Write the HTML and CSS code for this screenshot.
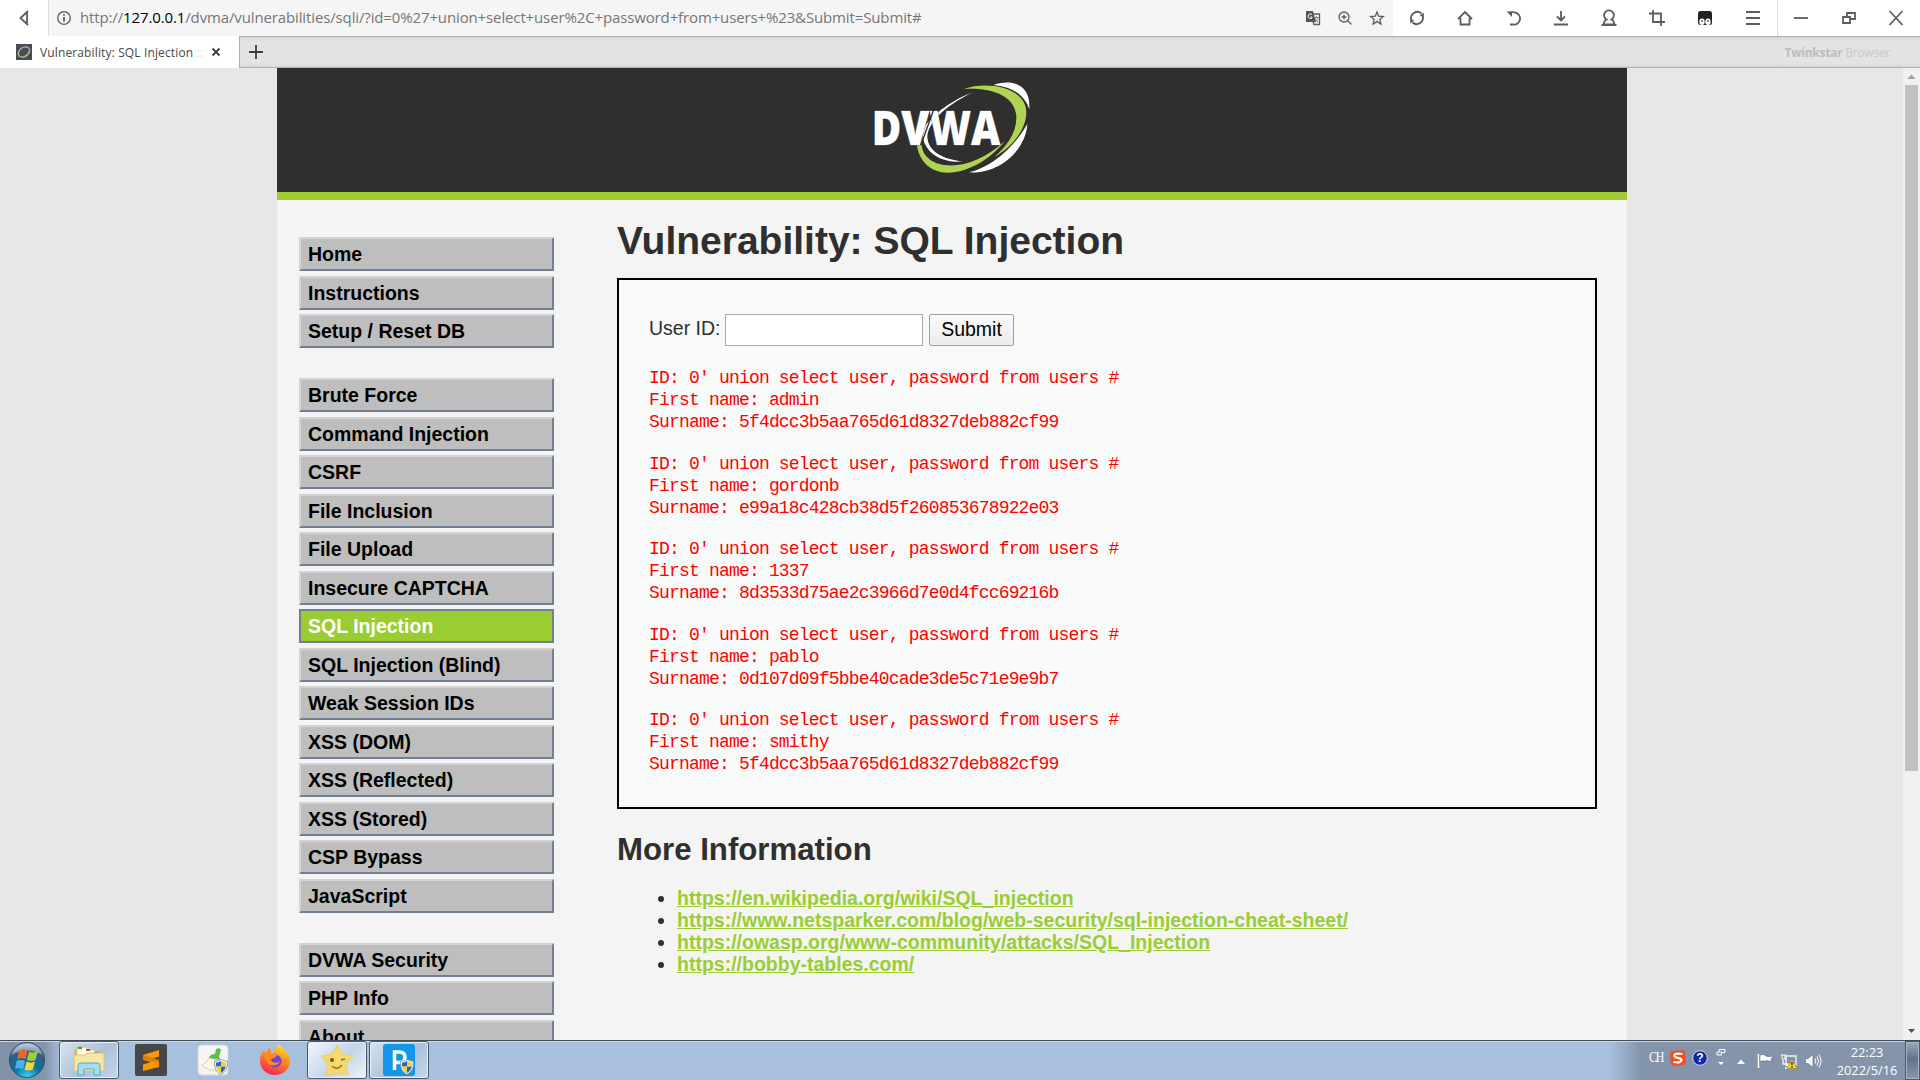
FILE: index.html
```html
<!DOCTYPE html>
<html lang="en">
<head>
<meta charset="utf-8">
<title>Vulnerability: SQL Injection</title>
<link rel="stylesheet" href="styles.css">
</head>
<body>
<div class="toolbar">
  <div class="back"><svg width="14" height="18" viewBox="0 0 14 18"><path d="M11 2 3.500 9 11 16M10 3v12" class="ln"/></svg></div>
  <div class="address">
    <svg width="16" height="16" viewBox="0 0 16 16"><circle cx="8" cy="8" r="6.300" class="ln thin"/><path d="M8 7v4.500M8 4.300v1.500" class="ln"/></svg>
    <div class="url">http://<b>127.0.0.1</b>/dvma/vulnerabilities/sqli/?id=0%27+union+select+user%2C+password+from+users+%23&amp;Submit=Submit#</div>
    <div class="address-icons">
      <svg width="16" height="16" viewBox="0 0 16 16"><path d="M1 1h7l3 11H1z" fill="#555"/><path d="M8 4h6.500v10.500H9l-1-3" class="ln thin"/><path d="M7 4.500a2.300 2.300 0 1 0 0 3.500V7H5.500" fill="none" stroke="#fff"/><path d="M9 7.500h5M11.500 6v1.500M13 8c-.5 2-2 3.500-3 4M10 8c.5 2 2 3.500 3.500 4" class="ln hair"/></svg>
      <svg width="16" height="16" viewBox="0 0 16 16"><circle cx="7" cy="7" r="5" class="ln thin"/><path d="m10.500 10.500 4 4M4.500 7h5M7 4.500v5" class="ln thin"/></svg>
      <svg width="16" height="16" viewBox="0 0 16 16"><path d="m8 2 1.700 4.200 4.600.3-3.500 3 1.100 4.500L8 11.600 4.100 14l1.100-4.500-3.500-3 4.600-.3z" class="ln thin"/></svg>
    </div>
  </div>
  <div class="tools">
    <svg width="18" height="18" viewBox="0 0 18 18"><path d="M3.300 11A6.300 6.300 0 0 1 13.500 4.500M14.700 7A6.300 6.300 0 0 1 4.500 13.500" class="ln"/><path d="M15.800 3.500v5l-4-2zM2.200 14.500v-5l4 2z" fill="#5b5d60"/></svg>
    <svg width="18" height="18" viewBox="0 0 18 18"><path d="M2 10 9 3l7 7M4.500 9v6.500h9V9" class="ln"/></svg>
    <svg width="18" height="18" viewBox="0 0 18 18"><path d="M5 4q3-1.500 6-.5a6 6 0 0 1-2 12H6" class="ln"/><path d="M2.500 2.500H8v5.500z" fill="#5b5d60"/></svg>
    <svg width="18" height="18" viewBox="0 0 18 18"><path d="M9 2v9M5 7.500l4 4 4-4M2 15.500h14" class="ln"/></svg>
    <svg width="18" height="18" viewBox="0 0 18 18"><path d="M6.500 10.500a4.900 4.900 0 1 1 5 0c1.500.6 2.500 2.500 3 5h-11c.5-2.500 1.500-4.400 3-5zM1.500 16h15" class="ln"/></svg>
    <svg width="18" height="18" viewBox="0 0 18 18"><path d="M5 1v12h12M1 4.500h12V17" class="ln"/></svg>
    <svg width="18" height="18" viewBox="0 0 18 18"><rect x="2" y="2" width="14" height="14" rx="2.500" fill="#222"/><ellipse cx="6" cy="12.800" rx="2.700" ry="3.200" fill="#fff"/><ellipse cx="12" cy="12.800" rx="2.700" ry="3.200" fill="#fff"/><path d="M6 11v2M12 11v2" stroke="#222"/></svg>
    <svg width="18" height="18" viewBox="0 0 18 18"><path d="M2 3h14M2 9h14M2 15h14" class="ln"/></svg>
  </div>
  <div class="window-buttons">
    <svg width="18" height="18" viewBox="0 0 18 18"><path d="M2 9h14" class="ln"/></svg>
    <svg width="18" height="18" viewBox="0 0 18 18"><path d="M3 8h7v6H3zM7 8V4h8v6h-5" class="ln"/></svg>
    <svg width="18" height="18" viewBox="0 0 18 18"><path d="m2.500 2 13 14M15.500 2l-13 14" class="ln"/></svg>
  </div>
</div>
<div class="tabs">
  <div class="tab">
    <svg width="16" height="16" viewBox="0 0 16 16"><path d="M0 0h16v16H0z" fill="#484d55"/><ellipse cx="8" cy="8" rx="6.200" ry="4.500" transform="rotate(-35 8 8)" fill="none" stroke="#b7bcae" stroke-width="1.300"/><path d="M13.500 4c.5 4-3 8-8 9" fill="none" stroke="#93b13f"/></svg>
    <span class="tab-title">Vulnerability: SQL Injection <i>::</i></span>
    <svg width="10" height="10" viewBox="0 0 10 10"><path d="m1.500 1.500 7 7M8.500 1.500l-7 7" class="ln dark"/></svg>
  </div>
  <div class="tab-rest">
    <svg width="16" height="16" viewBox="0 0 16 16"><path d="M8 1v14M1 8h14" class="ln dark"/></svg>
    <span class="brand"><b>Twinkstar</b> Browser</span>
  </div>
</div>
<div class="viewport">
  <div class="page">
    <div class="header">
      <svg class="logo" width="160" height="94" viewBox="98 64 480 282">
        <path d="M402 97C335 122 262 175 251 215C244 265 295 314 370 305C310 299 266 275 264 232C266 190 310 142 402 97z" fill="#fff"/>
        <text x="97" y="255" textLength="386" lengthAdjust="spacingAndGlyphs" class="logo-text">DVWA</text>
        <path d="m283 150-38 105" stroke="#2f2f2f" stroke-width="4"/>
        <path d="M373 88C450 62 562 85 561 160C560 215 510 268 465 292C500 262 533 220 531 170C527 110 460 82 373 88zM233 257C240 310 280 340 325 339C390 337 450 300 498 243C440 295 380 320 325 317C280 315 250 290 247 257z" fill="#afd352"/>
        <path d="M462 76C500 62 575 60 570 148C555 105 520 82 462 76zM564 193C560 270 480 345 388 338C450 325 520 270 564 193z" fill="#fff"/>
      </svg>
    </div>
    <div class="body">
      <div class="menu">
        <ul><li>Home</li><li>Instructions</li><li>Setup / Reset DB</li></ul>
        <ul><li>Brute Force</li><li>Command Injection</li><li>CSRF</li><li>File Inclusion</li><li>File Upload</li><li>Insecure CAPTCHA</li><li class="selected">SQL Injection</li><li>SQL Injection (Blind)</li><li>Weak Session IDs</li><li>XSS (DOM)</li><li>XSS (Reflected)</li><li>XSS (Stored)</li><li>CSP Bypass</li><li>JavaScript</li></ul>
        <ul><li>DVWA Security</li><li>PHP Info</li><li>About</li></ul>
      </div>
      <div class="main">
        <h1>Vulnerability: SQL Injection</h1>
        <div class="box">
          <div class="form"><label>User ID:</label><input type="text"><button>Submit</button></div>
<pre>ID: 0' union select user, password from users #
First name: admin
Surname: 5f4dcc3b5aa765d61d8327deb882cf99</pre>
<pre>ID: 0' union select user, password from users #
First name: gordonb
Surname: e99a18c428cb38d5f260853678922e03</pre>
<pre>ID: 0' union select user, password from users #
First name: 1337
Surname: 8d3533d75ae2c3966d7e0d4fcc69216b</pre>
<pre>ID: 0' union select user, password from users #
First name: pablo
Surname: 0d107d09f5bbe40cade3de5c71e9e9b7</pre>
<pre>ID: 0' union select user, password from users #
First name: smithy
Surname: 5f4dcc3b5aa765d61d8327deb882cf99</pre>
        </div>
        <h2>More Information</h2>
        <ul class="links">
          <li><a>https://en.wikipedia.org/wiki/SQL_injection</a></li>
          <li><a>https://www.netsparker.com/blog/web-security/sql-injection-cheat-sheet/</a></li>
          <li><a>https://owasp.org/www-community/attacks/SQL_Injection</a></li>
          <li><a>https://bobby-tables.com/</a></li>
        </ul>
      </div>
    </div>
  </div>
  <div class="scrollbar">
    <svg width="17" height="17" viewBox="0 0 17 17"><path d="m4.500 11 4-4.500 4 4.500z" fill="#a3a3a3"/></svg>
    <div class="thumb"></div>
    <svg width="17" height="17" viewBox="0 0 17 17"><path d="m5 6 3.500 4L12 6z" fill="#505050"/></svg>
  </div>
</div>
<div class="taskbar">
  <svg width="0" height="0" class="defs"><defs>
    <radialGradient id="orb" cx=".5" cy="1" r="1"><stop offset="0" stop-color="#35dcfa"/><stop offset=".4" stop-color="#0b6f9f"/><stop offset=".75" stop-color="#365d7e"/><stop offset="1" stop-color="#a9c3d6"/></radialGradient>
    <linearGradient id="fox" x1=".7" y1="0" x2=".3" y2="1"><stop offset="0" stop-color="#ffe32f"/><stop offset=".45" stop-color="#ff8a1c"/><stop offset="1" stop-color="#f0205b"/></linearGradient>
    <symbol id="shield" viewBox="0 0 14 16"><path d="M7 0c2 1.500 4 2 6.500 2 .5 7-1.500 11-6.500 13.500C2 13 0 9 .5 2 3 2 5 1.500 7 0z" fill="#e8e8e8" stroke="#777" stroke-width=".6"/><path d="M7 2v5.500H2V3.500C4 3.500 5.500 3 7 2zM7 7.500h4.700C11.200 10.500 9.500 12.500 7 14z" fill="#2467c4"/><path d="M7 2v5.500h4.900v-4C10 3.500 8.500 3 7 2zM7 7.500H2.200C2.700 10.500 4.500 12.500 7 14z" fill="#f8cf2c"/></symbol>
  </defs></svg>
  <div class="start"><svg width="38" height="38" viewBox="0 0 38 38"><circle cx="19" cy="19" r="17.500" fill="url(#orb)" stroke="#2c4f6b"/><path d="M4 14C8-1 30-1 34 14 27 8 11 8 4 14z" fill="#fff" opacity=".35"/><path d="M11 10c3-2 6-2 8.500-.5L17.500 18c-3-1.500-6-1-8.500 0z" fill="#ef6523"/><path d="M21 10.500c3 1.500 6 1 9-.5l-2.500 9c-3 1.500-6 1-8.500 0z" fill="#9bcf3a"/><path d="M8.500 20c3-1.500 6-1.500 8.500 0l-2 8c-3-1.500-5.500-1.500-8 0z" fill="#4cb1ee"/><path d="M18.500 20.500c3 1.500 5.500 1.500 8.500 0l-2.200 8c-3 1.500-6 1.300-8.300 0z" fill="#fdd33c"/></svg></div>
  <div class="task open"><svg width="32" height="32" viewBox="0 0 32 32"><path d="M2 6h9l2 2h17v18H2z" fill="#ecd078" stroke="#c9a750"/><path d="M4 3h10v3h8v3h8v4H4z" fill="#fffbe8" stroke="#d5bd76"/><path d="M5 3h4v2H5z" fill="#25ad3a"/><path d="M13 5h4v2h-4z" fill="#d8442c"/><path d="M21 8h4v2h-4z" fill="#2a8ad4"/><path d="M1 11h11l2-2h17v18H1z" fill="#f8e7a0" stroke="#dcc275"/><path d="M5 31V22q0-3 3-3h16q3 0 3 3v9h-6v-6H11v6z" fill="#a8dcf2" stroke="#51a9d3"/></svg></div>
  <div class="task"><svg width="32" height="32" viewBox="0 0 32 32"><rect width="32" height="32" rx="2" fill="#474747"/><path d="m8 11 16-5v6.500l-8 2.500 8 2v6L8 27v-6.500l8-2.500-8-2z" fill="#ff9800"/><path d="m8 11 16 5v2L8 16z" fill="#dc7d05"/></svg></div>
  <div class="task"><svg width="32" height="32" viewBox="0 0 32 32"><rect x="1" y="1" width="30" height="30" rx="4" fill="#f5f5f2" stroke="#d7d7d7"/><path d="M19 5q4-2 5 1l-2 7 2 3-12-2q1-4 6-4z" fill="#58bf50"/><path d="m12 14 11 3-3 9q-10 1-15-5 5-2 7-7z" fill="#fff6e8" stroke="#cbbfae" stroke-width=".7"/><use href="#shield" x="17" y="15" width="14" height="16"/></svg></div>
  <div class="task"><svg width="32" height="32" viewBox="0 0 32 32"><path d="M17 4c1-2 2-3 3.500-4 1 4 10 7 10.500 17 0 8-7 14-15 14S1 25 1 17c0-4 1-7 4-11l1 4 4-3 2 5z" fill="url(#fox)"/><circle cx="16" cy="17" r="6.500" fill="#7440d8"/><path d="M3 9c2-1 3-1 5-1 0-2 2-4 3-4l2 6 5 1c-1 3-5 3-6 5 1 3 6 4 9 1-2 6-12 6-13 0-2-2-3-4-5-8z" fill="#ff8b20"/></svg></div>
  <div class="task open bright"><svg width="34" height="32" viewBox="0 0 34 32"><path d="m17 1 5 9 11 2-7 8 2 11q-6-2-11-1-5-1-11 1l2-11-7-8 11-2z" fill="#f5da6b" stroke="#e9ce69"/><circle cx="12" cy="16" r="2" fill="#7a561c"/><path d="m21 16 4-1M12 22q5 5 10-1" fill="none" stroke="#9a6b22" stroke-width="1.300"/></svg></div>
  <div class="task open"><svg width="32" height="32" viewBox="0 0 32 32"><rect width="32" height="32" rx="3" fill="#1397e9"/><path d="M11.500 26V8H16q6 0 6 5.200t-6 5.200h-4.500" fill="none" stroke="#fff" stroke-width="3.500"/><use href="#shield" x="17" y="15" width="14" height="16"/></svg></div>
  <div class="tray">
    <span class="lang">CH</span>
    <svg class="s" width="16" height="16" viewBox="0 0 16 16"><rect x=".5" y=".5" width="15" height="15" rx="3" fill="#f4511e" transform="rotate(-6 8 8)"/><path d="M12.500 4Q4 2.500 4.500 6c.5 2.500 7 1.500 7 4Q11 13.500 3.500 12" fill="none" stroke="#fff" stroke-width="2.200"/></svg>
    <svg class="q" width="16" height="16" viewBox="0 0 16 16"><circle cx="8" cy="8" r="7.300" fill="#1028a8" stroke="#d5dbe5"/><text x="8" y="12.300" text-anchor="middle" class="qmark">?</text></svg>
    <svg class="ime" width="10" height="20" viewBox="0 0 10 20"><path d="M1 5h4.500v3H1zM3 4.500V2.500h6v3H6" fill="none" stroke="#fff"/><path d="M2 15h6l-3 3z" fill="#fff"/></svg>
    <svg class="up" width="8" height="6" viewBox="0 0 8 6"><path d="m0 5 4-4.500L8 5z" fill="#fff"/></svg>
    <svg class="low" width="18" height="18" viewBox="0 0 18 18"><path d="M2.500 2v14" stroke="#fff" stroke-width="1.500"/><path d="M4 3q3-1 5 0l.5 1Q13 5 17 4l-2 3.500 1 1.500q-3 .5-5.500-.5L10 9Q7 8.500 4 9.500z" fill="#fff" stroke="#556" stroke-width=".5"/></svg>
    <svg class="low" width="18" height="18" viewBox="0 0 18 18"><path d="M6 4h10v9H6zM3 8v4h5v4H5" fill="none" stroke="#f3f3f3" stroke-width="1.400"/><path d="M2 3v4h3V3M1 3h5" fill="none" stroke="#fff"/><path d="m12 7 5 9.500H7z" fill="#ffd21b" stroke="#927000" stroke-width=".5"/><path d="M12 10v3M12 14v1.500" stroke="#222" stroke-width="1.300"/></svg>
    <svg class="low" width="18" height="18" viewBox="0 0 18 18"><path d="M1.500 6.500H4l5-4v13l-5-4H1.500z" fill="#f5f5f5" stroke="#58697c" stroke-width=".6"/><path d="M11 6.500q1.500 2.500 0 5M13 4.500q3 4.500 0 9M15 2.500q4 6.500 0 13" fill="none" stroke="#fff"/></svg>
    <div class="clock"><span>22:23</span><span>2022/5/16</span></div>
    <div class="desktop"></div>
  </div>
</div>
</body>
</html>
```
FILE: styles.css
```css
* { box-sizing: border-box; }
body { margin: 0; width: 1920px; height: 1080px; overflow: hidden; display: flex; flex-direction: column; font-family: "Liberation Sans", Arial, sans-serif; background: #e7e7e7; }
ul { list-style: none; margin: 0; padding: 0; }
svg { display: block; flex: none; }
.ln { fill: none; stroke: #5b5d60; stroke-width: 1.8; }
.thin { stroke-width: 1.3; }
.hair { stroke-width: .7; }
.dark { stroke: #3c3e40; }

.toolbar { height: 36px; flex: none; display: flex; background: #fff; font-family: "Open Sans", sans-serif; }
.back { width: 49px; border-right: 1px solid #dcdcdc; display: flex; align-items: center; justify-content: center; }
.address { width: 1344px; background: #f5f5f5; display: flex; align-items: center; padding: 0 8px 0 7px; }
.url { margin: 0 0 2px 8px; flex: 1; font-size: 15px; letter-spacing: -.13px; color: #767676; white-space: nowrap; }
.url b { font-weight: 400; color: #000; }
.address-icons { display: flex; gap: 16px; }
.tools { width: 385px; padding-right: 1px; display: grid; grid-template-columns: repeat(8, 48px); place-items: center; border-right: 1px solid #dcdcdc; }
.window-buttons { display: grid; grid-template-columns: repeat(3, 47.500px); place-items: center; }

.tabs { height: 32px; flex: none; display: flex; font-family: "Open Sans", sans-serif; }
.tab { width: 239px; background: #fff; display: flex; align-items: center; padding: 0 18px 0 16px; }
.tab-title { margin-left: 8px; width: 163px; margin-right: 7px; font-size: 12px; letter-spacing: .13px; color: #484848; white-space: nowrap; }
.tab-title i { color: #ddd; font-style: normal; }
.tab svg:last-child { margin-left: 1px; }
.tab-rest { flex: 1; display: flex; align-items: center; justify-content: space-between; padding: 0 30px 0 8px; border: 1px solid #aeaeae; border-right: 0; background: linear-gradient(#d5d5d5, #e3e3e3 4px, #e3e3e3 27px, #d8d8d8); }
.brand { font-size: 12px; letter-spacing: -.25px; color: #cacaca; }
.brand b { color: #bdbdbd; }

.viewport { height: 972px; flex: none; overflow: hidden; display: flex; justify-content: space-between; padding-left: 277px; }
.page { width: 1350px; background: #f4f4f4; height: 1020px; }
.header { height: 132px; background: #2f2f2f; border-bottom: 8px solid #a1cc33; display: flex; justify-content: center; padding: 13px 0 0 0; }
.logo-text { font: 800 142px "Open Sans", sans-serif; fill: #fff; stroke: #59606a; stroke-width: 3; paint-order: stroke; }
.body { display: flex; padding-left: 22px; }
.menu { width: 255px; padding-top: 37px; display: flex; flex-direction: column; gap: 30px; flex: none; }
.menu ul { display: flex; flex-direction: column; gap: 4.500px; }
.menu li { height: 34px; border: 2px solid; border-color: #d3d3d3 #708090 #708090 #d3d3d3; background: #bebebe; color: #000; font-size: 19.500px; font-weight: 700; line-height: 31px; padding-left: 7px; white-space: nowrap; }
.menu .selected { background: #9acd32; color: #fff; border-color: #708090; }
.main { margin-left: 63px; width: 980px; color: #2f2f2f; }
h1 { margin: 18px 0 15px; font-size: 39px; line-height: 45px; }
.box { height: 531px; border: 2px solid #000; background: #f8faf9; padding: 34px 30px 0; }
.form { height: 32px; display: flex; align-items: center; font-size: 19.500px; margin-bottom: 21px; }
.form label { width: 76px; line-height: 29px; align-self: flex-start; white-space: nowrap; }
.form input { width: 198px; height: 32px; border: 1px solid #a9a9a9; background: #fff; padding: 0; margin: 0 6px 0 0; }
.form button { width: 85px; height: 32px; border: 1px solid #a0a0a0; border-radius: 2px; padding: 0 0 2px; font: 19.500px "Liberation Sans", Arial, sans-serif; color: #000; background: linear-gradient(#fafafa, #ececec); }
pre { margin: 0 0 19.500px; color: #f00; font: 18px/22px "Liberation Mono", "Courier New", monospace; letter-spacing: -.812px; }
h2 { margin: 23px 0 19px; font-size: 31.200px; line-height: 36px; }
.links { padding-left: 60px; list-style: disc; font-size: 19.500px; line-height: 22px; }
.links a { color: #9acd32; font-weight: 700; text-decoration: underline; }

.scrollbar { width: 17px; background: #f1f1f1; display: flex; flex-direction: column; }
.thumb { width: 13px; height: 686px; margin: 0 auto 252px 2px; background: #c1c1c1; }

.taskbar { height: 40px; flex: none; display: flex; border-top: 1px solid #434d59; background: linear-gradient(90deg, #8091a8, #8495ad 45px, #a6c0de 62px, #a6c0de 1610px, #8394ab 1642px); box-shadow: inset 0 1px #c5d8eb; }
.defs { width: 0; }
.start { width: 59px; padding-left: 8px; }
.task { width: 60px; margin-right: 2px; display: flex; align-items: center; justify-content: center; height: 38px; border: 1px solid transparent; border-radius: 3px; flex: none; }
.task.open { border-color: #49596c; box-shadow: inset 0 0 0 1px #e7f0fa; background: linear-gradient(135deg, #d6e3f1, #acc2da 55%, #c4d6e9); }
.task.bright { background: linear-gradient(135deg, #f2f7fc, #c3d4e8 55%, #f0f5fb); }
.tray { margin-left: auto; display: flex; align-items: flex-start; color: #fff; }
.lang { font: 14px/16px "Liberation Serif", serif; width: 21px; padding-top: 9px; letter-spacing: -1.500px; transform: scaleX(.85); transform-origin: left; }
.s, .q { margin: 9px 6px 0 0; }
.ime { margin: 6px 11px 0 2px; }
.up { margin: 18px 11px 0 0; }
.low { margin: 11px 6px 0 0; }
.clock { width: 78px; margin-right: -1px; font: 12.800px/18px "Open Sans", sans-serif; text-align: center; display: flex; flex-direction: column; padding-top: 2px; }
.desktop { width: 15px; height: 39px; border: 1px solid #49596c; background: linear-gradient(#9aaabc, #60738a 45%, #8799ae); box-shadow: inset 0 0 0 1px #a8b6c6; }
.qmark { font: 700 12px "Liberation Sans", sans-serif; fill: #fff; }
```
